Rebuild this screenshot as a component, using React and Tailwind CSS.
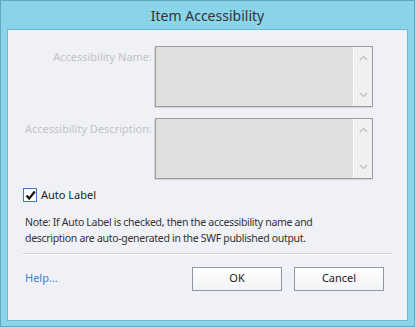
import React from "react";

function Chevron({ up }) {
  return (
    <svg width="9" height="6" viewBox="0 0 9 6" className="block">
      <path
        d={up ? "M1 5 L4.5 1.5 L8 5" : "M1 1 L4.5 4.5 L8 1"}
        fill="none"
        stroke="#c2c2c2"
        strokeWidth="1.5"
      />
    </svg>
  );
}

function TextBox() {
  return (
    <div className="w-[218px] h-[61px] border border-[#9c9c9c] bg-[#dfdfdf] flex justify-end shadow-[-1px_1px_0_#d2d4d8]">
      <div className="w-[19px] h-full bg-[#f0f0f0] border-l border-white flex flex-col items-center justify-between py-[8px]">
        <Chevron up />
        <Chevron />
      </div>
    </div>
  );
}

export default function App() {
  return (
    <div
      className="w-[415px] h-[327px] bg-[#8ad4ea] border border-[#5fa9c4] flex flex-col px-[6px] pb-[5px]"
      style={{ fontFamily: '"Noto Sans", "Open Sans", sans-serif' }}
    >
      <div className="h-[28px] flex items-center justify-center text-[14px] text-[#333] pt-[1px]">
        Item Accessibility
      </div>
      <div className="flex-1 border border-[#6fb6cf] bg-[#eff1f6] flex flex-col">
        <div className="grid grid-cols-[144px_218px] gap-x-[3px] gap-y-[11px] mt-[16px]">
          <div className="text-right text-[11px] text-[#c3c3c3] leading-none pt-[5px]">Accessibility Name:</div>
          <TextBox />
          <div className="text-right text-[11px] text-[#c3c3c3] leading-none pt-[5px]">Accessibility Description:</div>
          <TextBox />
        </div>
        <div className="flex items-center ml-[15px] mt-[8px] gap-[4px]">
          <div className="w-[14px] h-[14px] border border-[#3d7bbd] bg-white flex items-center justify-center">
            <svg width="11" height="11" viewBox="0 0 11 11">
              <path d="M1.5 5.5 L4.2 8.5 L9.8 1.5" fill="none" stroke="#111" strokeWidth="2.2" />
            </svg>
          </div>
          <span className="text-[11px] text-[#222]">Auto Label</span>
        </div>
        <div className="ml-[17px] mt-[10px] text-[10.5px] tracking-[-0.3px] leading-[16px] text-[#333]">
          Note: If Auto Label is checked, then the accessibility name and<br />
          description are auto-generated in the SWF published output.
        </div>
        <div className="mx-[15px] mt-[7px] h-[2px] border-t border-[#cacbcf] bg-white" />
        <div className="flex items-center mt-[12px] pl-[17px] pr-[23px]">
          <span className="text-[11px] text-[#3b7fd4] flex-1">Help...</span>
          <button className="w-[90px] h-[24px] border border-[#8e97a8] bg-gradient-to-b from-white to-[#f3f4f6] text-[11px] text-[#222]">OK</button>
          <button className="w-[90px] h-[24px] ml-[12px] border border-[#8e97a8] bg-gradient-to-b from-white to-[#f3f4f6] text-[11px] text-[#222]">Cancel</button>
        </div>
      </div>
    </div>
  );
}
